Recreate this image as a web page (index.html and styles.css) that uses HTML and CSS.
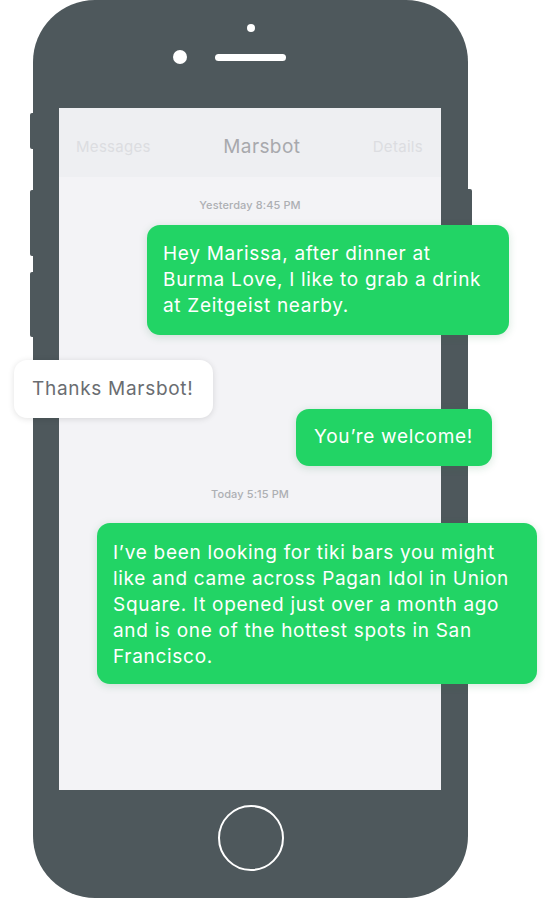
FILE: index.html
```html
<!DOCTYPE html>
<html lang="en">

<head>
    <meta charset="UTF-8" />
    <meta name="viewport" content="width=device-width, initial-scale=1" />
    <title>Marsbot</title>
    <link rel="stylesheet" href="styles.css">
</head>

<body>

    <!-- PHONE -->
    <div class="phone">
        <span class="side-btn left one"></span>
        <span class="side-btn left two"></span>
        <span class="side-btn left three"></span>
        <span class="side-btn right one"></span>

        <div class="bezel-top">
            <span class="sensor"></span>
            <div class="earpiece">
                <span class="camera"></span>
                <span class="speaker"></span>
            </div>
        </div>

        <!-- SCREEN -->
        <div class="screen">
            <nav class="chat-nav">
                <span class="nav-link">Messages</span>
                <span class="nav-title">Marsbot</span>
                <span class="nav-link">Details</span>
            </nav>

            <div class="chat">
                <div class="stamp first">Yesterday 8:45 PM</div>
                <div class="bubble bot b-dinner">Hey Marissa, after dinner at Burma Love, I like to grab a drink at Zeitgeist nearby.</div>
                <div class="bubble user b-thanks">Thanks Marsbot!</div>
                <div class="bubble bot b-welcome">You’re welcome!</div>
                <div class="stamp">Today 5:15 PM</div>
                <div class="bubble bot b-tiki">I’ve been looking for tiki bars you might like and came across Pagan Idol in Union Square. It opened just over a month ago and is one of the hottest spots in San Francisco.</div>
            </div>
        </div>

        <div class="bezel-bottom">
            <span class="home"></span>
        </div>
    </div>

</body>

</html>
```

FILE: styles.css
```css
* {
    box-sizing: border-box;
}

body {
    margin: 0;
    font-family: Inter, "Noto Sans", sans-serif;
    background: #fff;
    overflow: hidden;
}

/* --- PHONE --- */
.phone {
    position: relative;
    margin-left: 33px;
    width: 435px;
    height: 898px;
    background: #4e585c;
    border-radius: 62px;
    display: flex;
    flex-direction: column;
}

.side-btn {
    position: absolute;
    z-index: -1;
    width: 8px;
    background: #4e585c;
    border-radius: 2px;
}

.side-btn.left {
    left: -3px;
}

.side-btn.right {
    right: -4px;
}

.side-btn.left.one {
    top: 113px;
    height: 36px;
}

.side-btn.left.two {
    top: 190px;
    height: 66px;
}

.side-btn.left.three {
    top: 272px;
    height: 65px;
}

.side-btn.right.one {
    top: 189px;
    height: 66px;
}

.bezel-top {
    height: 108px;
    display: flex;
    flex-direction: column;
    align-items: center;
    padding-top: 24px;
}

.sensor {
    width: 8px;
    height: 8px;
    border-radius: 50%;
    background: #fff;
}

.earpiece {
    display: flex;
    align-items: center;
    margin-top: 18px;
}

.camera {
    width: 14px;
    height: 14px;
    border-radius: 50%;
    background: #fff;
    margin-right: 28px;
}

.speaker {
    width: 71px;
    height: 7px;
    border-radius: 4px;
    background: #fff;
    margin-right: 42px;
}

/* --- SCREEN --- */
.screen {
    height: 682px;
    margin: 0 27px 0 26px;
    background: #f3f3f6;
}

.chat-nav {
    height: 69px;
    display: flex;
    justify-content: space-between;
    align-items: flex-end;
    padding: 0 18px 19px 17px;
    background: #eeeff2;
}

.nav-link {
    font-size: 15px;
    line-height: 22px;
    letter-spacing: 0.3px;
    color: #dcdde1;
}

.nav-title {
    font-size: 19px;
    line-height: 22px;
    letter-spacing: 0.4px;
    color: #a8a9ad;
}

.chat {
    display: flex;
    flex-direction: column;
}

.stamp {
    align-self: center;
    font-size: 11px;
    line-height: 14px;
    font-weight: 500;
    letter-spacing: 0.1px;
    color: #adafb3;
    margin-top: 21px;
}

.bubble {
    font-size: 19px;
    line-height: 26px;
    letter-spacing: 0.7px;
    padding: 16px 16px;
    border-radius: 13px;
}

.bubble.bot {
    align-self: flex-end;
    background: #22d465;
    color: #fff;
    box-shadow: 0 2px 8px rgba(30, 120, 60, 0.18);
}

.bubble.user {
    align-self: flex-start;
    background: #fff;
    color: #6a6d71;
    padding: 16px 18px;
    box-shadow: 0 1px 6px rgba(0, 0, 0, 0.12);
}

.b-thanks,
.b-welcome {
    white-space: nowrap;
}

.b-dinner {
    width: 362px;
    margin-top: 13px;
    margin-right: -68px;
}

.b-thanks {
    width: 199px;
    margin-top: 25px;
    margin-left: -45px;
}

.b-welcome {
    width: 196px;
    margin-top: -9px;
    margin-right: -51px;
    padding: 15px 18px 16px;
}

.b-tiki {
    width: 440px;
    margin-top: 22px;
    margin-right: -96px;
    padding: 17px 16px 14px;
}

.bezel-bottom {
    flex: 1;
    display: flex;
    justify-content: center;
    padding-top: 15px;
}

.home {
    width: 66px;
    height: 66px;
    border-radius: 50%;
    border: 2.5px solid #fff;
}
```
